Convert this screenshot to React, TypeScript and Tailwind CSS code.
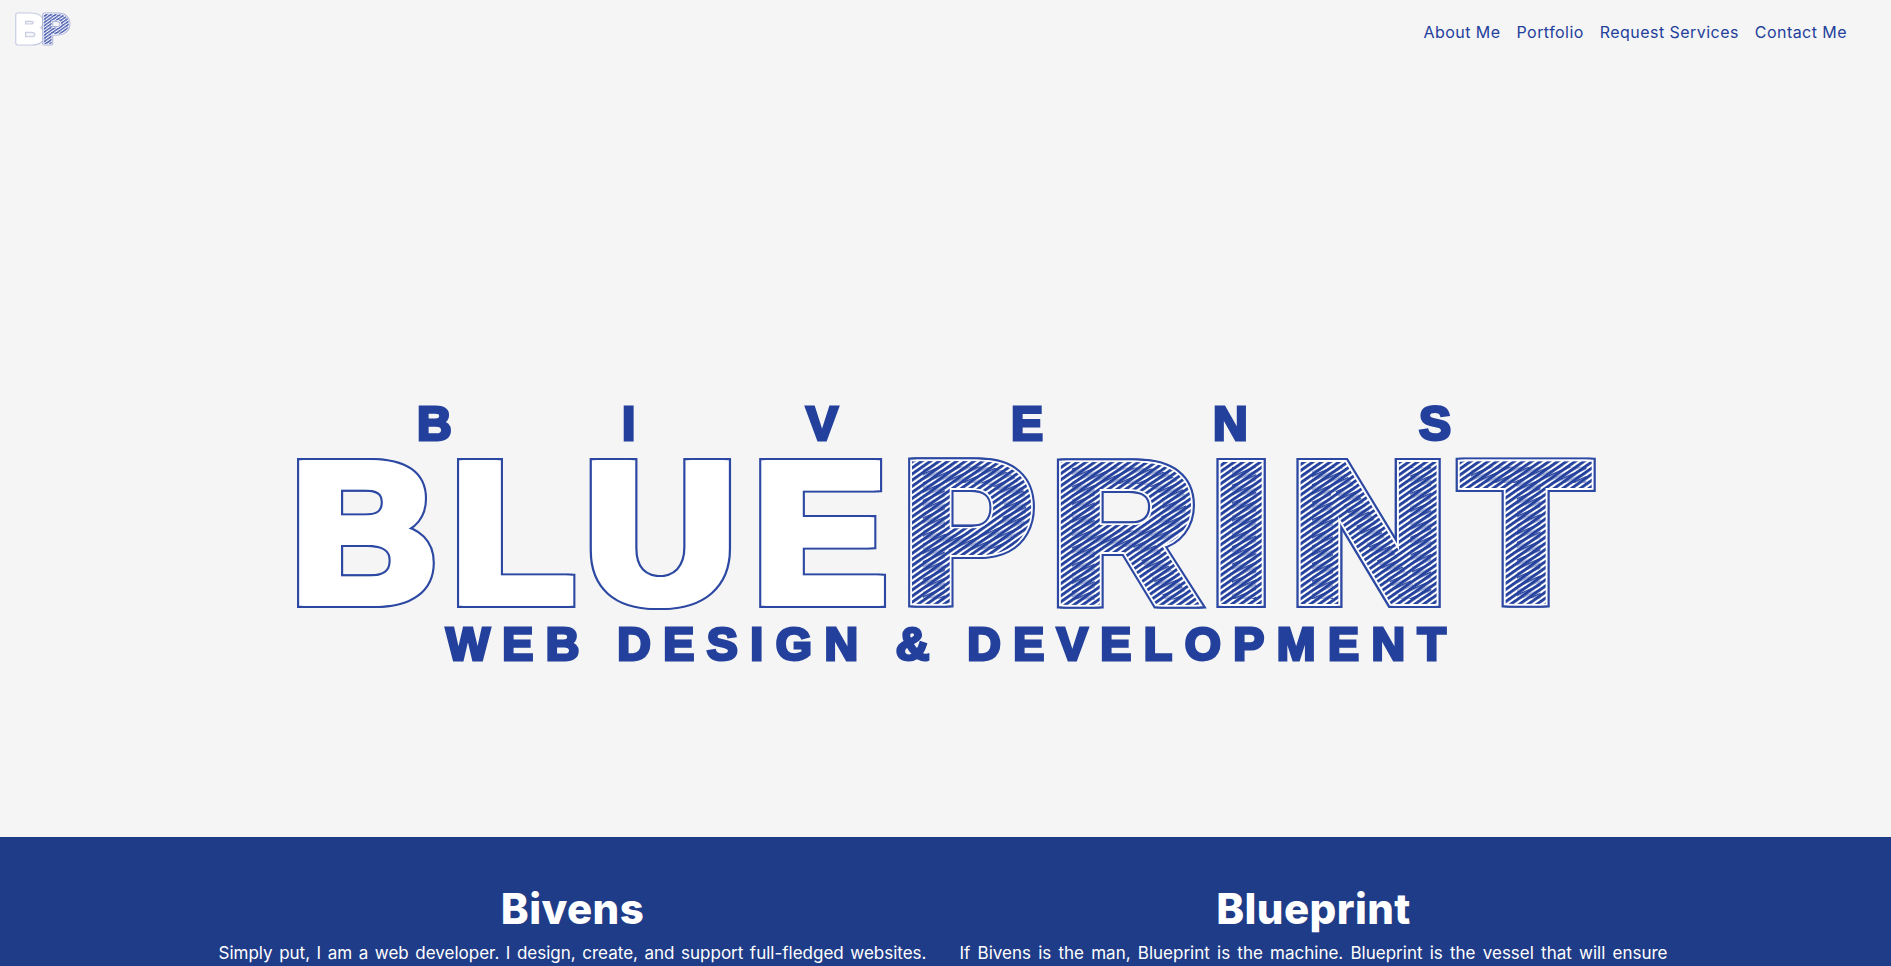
const BLUE = "#23409c";
const LINE = "#2c48a2";

type L = { c: string; x: number; w: number };
const blueLetters: L[] = [
  { c: "B", x: 298, w: 137 },
  { c: "L", x: 458, w: 118 },
  { c: "U", x: 590, w: 142 },
  { c: "E", x: 760, w: 126 },
];
const printLetters: L[] = [
  { c: "P", x: 909, w: 127 },
  { c: "R", x: 1058, w: 147 },
  { c: "I", x: 1218, w: 49 },
  { c: "N", x: 1298, w: 142 },
  { c: "T", x: 1457, w: 140 },
];
// left bearing and ink width of Liberation Sans Bold glyphs, in em
const metrics: Record<string, [number, number]> = {
  B: [0.07, 0.61],
  L: [0.07, 0.515],
  U: [0.058, 0.61],
  E: [0.07, 0.56],
  P: [0.07, 0.57],
  R: [0.07, 0.65],
  I: [0.07, 0.15],
  N: [0.07, 0.585],
  T: [0.014, 0.595],
};
const FS = 200;
const STROKE = 5.5;
const D = 3; // sideways widening, which gives the stems their heavy look

function letterTransform(l: L, base: number) {
  const [lsb, ink] = metrics[l.c];
  const sx = (l.w - 2 * STROKE - 2 * D) / (ink * FS);
  const tx = l.x + STROKE + D - lsb * FS * sx;
  return `translate(${tx} ${base}) scale(${sx} 1)`;
}

const OFFSETS = [-D, 0, D];

function Big({ l, hatch }: { l: L; hatch?: boolean }) {
  const id = `big-${l.c}-${l.x}`;
  const href = `#${id}`;
  return (
    <g strokeLinejoin="miter" strokeMiterlimit={6}>
      <g fill={LINE} stroke={LINE} strokeWidth={STROKE * 2 + 1}>
        <text id={id} transform={letterTransform(l, 601.5)} fontSize={FS}>{l.c}</text>
        <use href={href} x={-D} />
        <use href={href} x={D} />
      </g>
      <g fill="#fff" stroke="#fff" strokeWidth={STROKE * 2 - 3.4}>
        {OFFSETS.map((o) => <use key={o} href={href} x={o} />)}
      </g>
      {hatch && (
        <>
          <mask id={`${id}-edge`} maskUnits="userSpaceOnUse" x={l.x - 4} y={450} width={l.w + 8} height={170}>
            <g fill="#fff" stroke="#fff" strokeWidth={STROKE * 2 - 7}>
              {OFFSETS.map((o) => <use key={o} href={href} x={o} />)}
            </g>
          </mask>
          <mask id={`${id}-core`} maskUnits="userSpaceOnUse" x={l.x - 4} y={450} width={l.w + 8} height={170}>
            <g fill="#fff" stroke="#000" strokeWidth={6}>
              {OFFSETS.map((o) => <use key={o} href={href} x={o} />)}
            </g>
          </mask>
          <rect x={l.x - 4} y={450} width={l.w + 8} height={170} fill="url(#hatch)" mask={`url(#${id}-edge)`} />
          <rect x={l.x - 4} y={450} width={l.w + 8} height={170} fill="url(#hatch2)" mask={`url(#${id}-core)`} />
        </>
      )}
    </g>
  );
}

function Hero() {
  const top: [string, number][] = [
    ["B", 419], ["I", 624], ["V", 808], ["E", 1013], ["N", 1215], ["S", 1421],
  ];
  return (
    <svg width="1311" height="270" viewBox="290 400 1311 270" className="block blur-[0.35px]" style={{ fontFamily: '"Liberation Sans", Arial, sans-serif', fontWeight: 700 }}>
      <defs>
        <pattern id="hatch" width="5" height="5" patternUnits="userSpaceOnUse" patternTransform="rotate(-35)">
          <rect width="5" height="2.9" fill={BLUE} />
        </pattern>
        <pattern id="hatch2" width="8" height="8" patternUnits="userSpaceOnUse" patternTransform="rotate(-24)">
          <rect width="8" height="1.6" fill={BLUE} />
          <rect y="4.5" width="8" height="1.1" fill={BLUE} opacity="0.8" />
        </pattern>
      </defs>
      <g fill={BLUE} stroke={BLUE} strokeWidth={3} fontSize={48} strokeLinejoin="miter">
        {top.map(([c, x]) => (
          <text key={c + x} x={x - 2} y={439.5}>{c}</text>
        ))}
      </g>
      {blueLetters.map((l) => <Big key={l.c} l={l} />)}
      {printLetters.map((l) => <Big key={l.c} l={l} hatch />)}
      <text x={446} y={660} fontSize={46.5} fill={BLUE} stroke={BLUE} strokeWidth={3} textLength={1000} lengthAdjust="spacing">
        WEB DESIGN &amp; DEVELOPMENT
      </text>
    </svg>
  );
}

function SmallLogo() {
  return (
    <svg width="62" height="38" viewBox="0 0 62 38" className="block blur-[0.5px]" style={{ fontFamily: '"Liberation Sans", Arial, sans-serif', fontWeight: 700 }}>
      <defs>
        <pattern id="mini" width="2.6" height="2.6" patternUnits="userSpaceOnUse" patternTransform="rotate(-35)">
          <rect width="2.6" height="1.4" fill="#4f62b3" />
        </pattern>
      </defs>
      <g fontSize="41" strokeLinejoin="round">
        <g fill="#c3c9e0" stroke="#c3c9e0" strokeWidth="5">
          <text id="mini-b" x="1.1" y="32">B</text>
        </g>
        <use href="#mini-b" fill="#fff" stroke="#fff" strokeWidth="2.8" />
        <g fill="#a9b1d8" stroke="#a9b1d8" strokeWidth="5">
          <text id="mini-p" x="28.1" y="32">P</text>
        </g>
        <use href="#mini-p" fill="#fff" stroke="#fff" strokeWidth="3" />
        <use href="#mini-p" fill="url(#mini)" stroke="url(#mini)" strokeWidth="2" />
      </g>
    </svg>
  );
}

const links = ["About Me", "Portfolio", "Request Services", "Contact Me"];

function Column({ title, text }: { title: string; text: string }) {
  return (
    <div className="w-[708px] text-center">
      <h2 className="text-[42px] leading-[48px] font-extrabold tracking-[0.4px] text-white">{title}</h2>
      <p className="mt-[7px] text-[17px] leading-[26px] text-white text-justify [text-align-last:justify]">{text}</p>
    </div>
  );
}

export default function App() {
  return (
    <div className="h-[966px] overflow-hidden bg-[#f5f5f5] font-['Inter','Liberation_Sans',sans-serif]">
      <div className="relative flex h-[837px] flex-col">
        <header className="flex items-start justify-between pl-[14px] pr-[44px] pt-[11px]">
          <SmallLogo />
          <nav className="mt-[9px] flex gap-[16px] text-[16px] leading-6 tracking-[0.45px] text-[#23409c]">
            {links.map((l) => (
              <a key={l} href="#">{l}</a>
            ))}
          </nav>
        </header>
        <main className="flex flex-1 items-center justify-center pt-[184px]">
          <Hero />
        </main>
      </div>
      <section className="h-[129px] bg-[#1f3c88] pt-[48px]">
        <div className="flex justify-center gap-[33px] pr-[5px]">
          <Column title="Bivens" text="Simply put, I am a web developer. I design, create, and support full-fledged websites." />
          <Column title="Blueprint" text="If Bivens is the man, Blueprint is the machine. Blueprint is the vessel that will ensure" />
        </div>
      </section>
    </div>
  );
}
